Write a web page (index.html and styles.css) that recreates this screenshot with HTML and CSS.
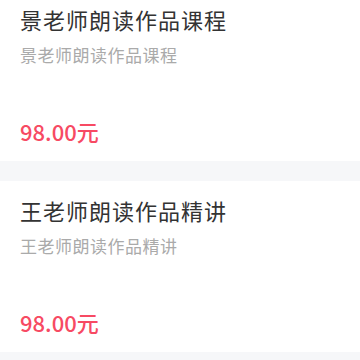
FILE: index.html
```html
<!DOCTYPE html>
<html lang="zh">
<head>
<meta charset="utf-8">
<link rel="stylesheet" href="styles.css">
</head>
<body>
<div class="list">
  <div class="card">
    <div class="title">景老师朗读作品课程</div>
    <div class="sub">景老师朗读作品课程</div>
    <div class="price">98.00元</div>
  </div>
  <div class="card">
    <div class="title">王老师朗读作品精讲</div>
    <div class="sub">王老师朗读作品精讲</div>
    <div class="price">98.00元</div>
  </div>
</div>
</body>
</html>
```
FILE: styles.css
```css
html, body {
  margin: 0;
  padding: 0;
  background: #f6f7f9;
  font-family: "Noto Sans CJK SC", "Noto Sans", sans-serif;
}
.list {
  margin-top: -10px;
  display: flex;
  flex-direction: column;
  gap: 20px;
}
.card {
  background: #fff;
  height: 171px;
  box-sizing: border-box;
  padding: 14px 20px 0;
  display: flex;
  flex-direction: column;
}
.title {
  font-size: 22px;
  line-height: 30px;
  color: #333;
  letter-spacing: 1px;
}
.sub {
  margin-top: 9px;
  font-size: 17px;
  line-height: 24px;
  color: #aaa;
  letter-spacing: 0.5px;
}
.price {
  margin-top: 51px;
  font-size: 22px;
  line-height: 26px;
  color: #f74a63;
  font-weight: 500;
}
```
